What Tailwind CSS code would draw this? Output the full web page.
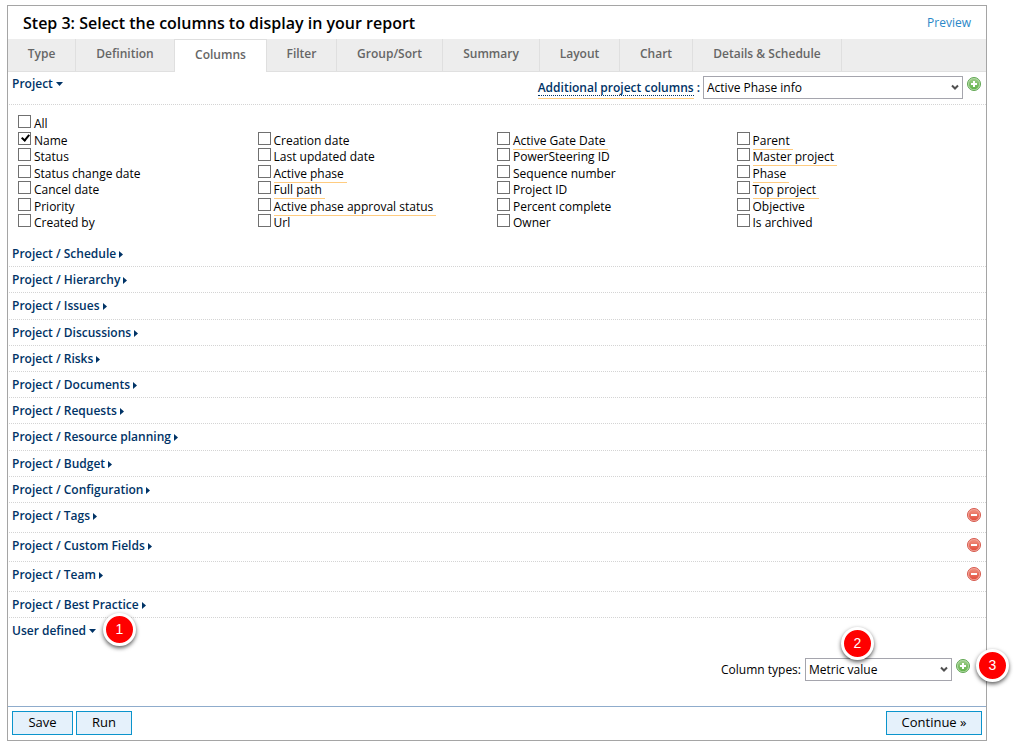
<!DOCTYPE html>
<html lang="en">
<head>
<meta charset="utf-8">
<title>Report wizard - Columns</title>
<script src="https://cdn.jsdelivr.net/npm/@tailwindcss/browser@4"></script>
</head>
<body class="bg-white font-['Open_Sans',sans-serif] text-[13px] text-black">
<svg class="absolute h-0 w-0" aria-hidden="true">
  <defs>
    <linearGradient id="gGreen" x1="0" y1="0" x2="0" y2="1"><stop offset="0" stop-color="#9ccb88"/><stop offset="1" stop-color="#62b34a"/></linearGradient>
    <linearGradient id="gRed" x1="0" y1="0" x2="0" y2="1"><stop offset="0" stop-color="#f0907f"/><stop offset="1" stop-color="#e2503f"/></linearGradient>
    <symbol id="plus" viewBox="0 0 14 14"><circle cx="7" cy="7" r="6.5" fill="#b9deac" stroke="#5fa552"/><circle cx="7" cy="7" r="5.2" fill="url(#gGreen)"/><path d="M7 4v6M4 7h6" stroke="#fff" stroke-width="2"/></symbol>
    <symbol id="minus" viewBox="0 0 14 14"><circle cx="7" cy="7" r="6.5" fill="#f4aa9f" stroke="#d4594d"/><circle cx="7" cy="7" r="5.2" fill="url(#gRed)"/><path d="M4 7h6" stroke="#fff" stroke-width="2"/></symbol>
    <symbol id="right" viewBox="0 0 4 7"><path d="M0 0L4 3.5L0 7z" fill="#003366"/></symbol>
    <symbol id="down" viewBox="0 0 7 4"><path d="M0 0h7L3.5 4z" fill="#003366"/></symbol>
    <symbol id="chev" viewBox="0 0 8 7"><path d="M1 1.5L4 4.5L7 1.5" fill="none" stroke="#505050" stroke-width="2"/></symbol>
  </defs>
</svg>

<main class="relative mt-[5px] mr-[27px] ml-[7px] border border-[#a5a5a5]">
  <header class="flex h-[33px] items-center justify-between pr-[15px] pl-[15px]">
    <h1 class="text-base leading-5 font-semibold">Step 3: Select the columns to display in your report</h1>
    <a href="#" class="text-[12px] text-[#2a87c8]">Preview</a>
  </header>

  <nav class="flex h-[33px] border-b border-[#e0e0e0] bg-[#ededed] text-[12px] leading-[30px] font-semibold text-[#666] [&>a]:border-r [&>a]:border-[#dfdfdf] [&>a]:text-center">
    <a href="#" class="w-[68px]">Type</a>
    <a href="#" class="w-[99px]">Definition</a>
    <a href="#" class="-mb-px w-[92px] border-t bg-white" aria-current="page">Columns</a>
    <a href="#" class="w-[70px]">Filter</a>
    <a href="#" class="w-[106px]">Group/Sort</a>
    <a href="#" class="w-[97px]">Summary</a>
    <a href="#" class="w-[80px]">Layout</a>
    <a href="#" class="w-[73px]">Chart</a>
    <a href="#" class="w-[149px]">Details &amp; Schedule</a>
  </nav>

  <section>
    <div class="ml-px flex h-[33px] items-start justify-between border-b border-dotted border-[#d4d4d4] pr-[5px] pl-[3px] font-semibold text-[#003366]">
      <button class="flex items-center gap-[3px] pt-1 text-[12px] leading-4">Project <svg class="h-1 w-[7px]"><use href="#down"/></svg></button>
      <div class="flex items-start pt-1">
        <label for="addcols" class="mr-[3px] pt-1 text-[12px] leading-4"><span class="inline-block border-b border-[#ffcc80] pb-[2px]"><span class="block border-b border-dotted border-[#003366] leading-[14px]">Additional project columns</span></span> :</label>
        <div class="relative">
          <select id="addcols" class="block h-[23px] w-[260px] appearance-none border border-[#a5a5ad] bg-white pl-[3px] text-[12px] font-normal text-black"><option>Active Phase info</option></select>
          <svg class="pointer-events-none absolute top-[8px] right-[4px] h-[7px] w-2"><use href="#chev"/></svg>
        </div>
        <button aria-label="Add project columns" class="ml-1 pt-px"><svg class="h-[14px] w-[14px]"><use href="#plus"/></svg></button>
      </div>
    </div>

    <div class="mt-[10px] grid h-[116px] grid-flow-col grid-cols-4 grid-rows-7 pr-[10px] pl-[10px] text-[12px] [&_input]:relative [&_input]:h-[13px] [&_input]:w-[13px] [&_input]:shrink-0 [&_input]:appearance-none [&_input]:border [&_input]:border-[#707070] [&_label]:flex [&_label]:h-4 [&_label]:items-start [&_label]:gap-[3px] [&_span]:leading-[17px] [&_span]:whitespace-nowrap [&_u]:-mt-px [&_u]:border-b [&_u]:border-[#ffcc80] [&_u]:pt-px [&_u]:pr-[3px] [&_u]:leading-[17px] [&_u]:whitespace-nowrap [&_u]:no-underline">
      <label><input type="checkbox"><span>All</span></label>
      <label><input type="checkbox" checked class="checked:after:absolute checked:after:top-0 checked:after:left-[4px] checked:after:h-[8px] checked:after:w-[5px] checked:after:rotate-[40deg] checked:after:border-r-2 checked:after:border-b-2 checked:after:border-black checked:after:content-['']"><span>Name</span></label>
      <label><input type="checkbox"><span>Status</span></label>
      <label><input type="checkbox"><span>Status change date</span></label>
      <label><input type="checkbox"><span>Cancel date</span></label>
      <label><input type="checkbox"><span>Priority</span></label>
      <label><input type="checkbox"><span>Created by</span></label>

      <label class="row-start-2"><input type="checkbox"><span>Creation date</span></label>
      <label><input type="checkbox"><span>Last updated date</span></label>
      <label><input type="checkbox"><u>Active phase</u></label>
      <label><input type="checkbox"><u>Full path</u></label>
      <label><input type="checkbox"><u>Active phase approval status</u></label>
      <label><input type="checkbox"><span>Url</span></label>

      <label class="row-start-2"><input type="checkbox"><u>Active Gate Date</u></label>
      <label><input type="checkbox"><span>PowerSteering ID</span></label>
      <label><input type="checkbox"><span>Sequence number</span></label>
      <label><input type="checkbox"><span>Project ID</span></label>
      <label><input type="checkbox"><span>Percent complete</span></label>
      <label><input type="checkbox"><span>Owner</span></label>

      <label class="row-start-2"><input type="checkbox"><u>Parent</u></label>
      <label><input type="checkbox"><u>Master project</u></label>
      <label><input type="checkbox"><u>Phase</u></label>
      <label><input type="checkbox"><u>Top project</u></label>
      <label><input type="checkbox"><span>Objective</span></label>
      <label><input type="checkbox"><span>Is archived</span></label>
    </div>
  </section>

  <section class="mt-[10px] ml-px grid h-[262px] auto-rows-fr text-[12px] leading-4 font-semibold text-[#003366] [&_button]:flex [&_button]:items-center [&_button]:gap-[3px] [&_svg]:mt-px [&_svg]:h-[7px] [&_svg]:w-1 [&>div]:flex [&>div]:items-center [&>div]:border-b [&>div]:border-dotted [&>div]:border-[#d4d4d4] [&>div]:pt-px [&>div]:pl-[3px]">
    <div><button>Project / Schedule <svg><use href="#right"/></svg></button></div>
    <div><button>Project / Hierarchy <svg><use href="#right"/></svg></button></div>
    <div><button>Project / Issues <svg><use href="#right"/></svg></button></div>
    <div><button>Project / Discussions <svg><use href="#right"/></svg></button></div>
    <div><button>Project / Risks <svg><use href="#right"/></svg></button></div>
    <div><button>Project / Documents <svg><use href="#right"/></svg></button></div>
    <div><button>Project / Requests <svg><use href="#right"/></svg></button></div>
    <div><button>Project / Resource planning <svg><use href="#right"/></svg></button></div>
    <div><button>Project / Budget <svg><use href="#right"/></svg></button></div>
    <div><button>Project / Configuration <svg><use href="#right"/></svg></button></div>
  </section>

  <section class="ml-px text-[12px] leading-4 font-semibold text-[#003366] [&>div]:flex [&>div]:items-start [&>div]:justify-between [&>div]:border-b [&>div]:border-dotted [&>div]:border-[#d4d4d4] [&>div]:pt-[5px] [&>div]:pr-[5px] [&>div]:pl-[3px]">
    <div class="h-[30px]"><button class="flex items-center gap-[3px]">Project / Tags <svg class="mt-px h-[7px] w-1"><use href="#right"/></svg></button><button aria-label="Remove tags"><svg class="h-[14px] w-[14px]"><use href="#minus"/></svg></button></div>
    <div class="h-[29px]"><button class="flex items-center gap-[3px]">Project / Custom Fields <svg class="mt-px h-[7px] w-1"><use href="#right"/></svg></button><button aria-label="Remove custom fields"><svg class="h-[14px] w-[14px]"><use href="#minus"/></svg></button></div>
    <div class="h-[30px]"><button class="flex items-center gap-[3px]">Project / Team <svg class="mt-px h-[7px] w-1"><use href="#right"/></svg></button><button aria-label="Remove team"><svg class="h-[14px] w-[14px]"><use href="#minus"/></svg></button></div>
    <div class="h-[26px]"><button class="flex items-center gap-[3px]">Project / Best Practice <svg class="mt-px h-[7px] w-1"><use href="#right"/></svg></button></div>
  </section>

  <section class="h-[88px] pt-[5px]">
    <button class="flex items-center gap-[3px] pl-1 text-[12px] leading-4 font-semibold text-[#003366]">User defined <svg class="h-1 w-[7px]"><use href="#down"/></svg></button>
    <div class="mt-[19px] flex items-start justify-end pr-4">
      <label for="coltype" class="mr-1 pt-1 text-[12px] leading-4">Column types:</label>
      <div class="relative">
        <select id="coltype" class="block h-[23px] w-[147px] appearance-none border border-[#a5a5ad] bg-white pl-[3px] text-[12px]"><option>Metric value</option></select>
        <svg class="pointer-events-none absolute top-[8px] right-[4px] h-[7px] w-2"><use href="#chev"/></svg>
      </div>
      <button aria-label="Add column" class="ml-1 pt-px"><svg class="h-[14px] w-[14px]"><use href="#plus"/></svg></button>
    </div>
  </section>

  <footer class="flex gap-[3px] border-t border-[#8faccc] px-1 pt-1 pb-[5px] text-[13px] [&>button]:h-6 [&>button]:border [&>button]:border-[#0b94cc] [&>button]:bg-[#e5f1fb]">
    <button class="w-[61px]">Save</button>
    <button class="w-[56px]">Run</button>
    <button class="ml-auto w-[96px]">Continue »</button>
  </footer>

  <!-- numbered callouts -->
  <div class="absolute top-[607px] left-[95px] flex h-[33px] w-[33px] items-center justify-center rounded-full border-3 border-white bg-[#f00] font-['Liberation_Sans',sans-serif] text-[14px] text-white shadow-[0_2px_4px_rgba(0,0,0,0.65)]">1</div>
  <div class="absolute top-[621px] right-[112px] flex h-[33px] w-[33px] items-center justify-center rounded-full border-3 border-white bg-[#f00] font-['Liberation_Sans',sans-serif] text-[14px] text-white shadow-[0_2px_4px_rgba(0,0,0,0.65)]">2</div>
  <div class="absolute top-[643px] -right-[23px] flex h-[33px] w-[33px] items-center justify-center rounded-full border-3 border-white bg-[#f00] font-['Liberation_Sans',sans-serif] text-[14px] text-white shadow-[0_2px_4px_rgba(0,0,0,0.65)]">3</div>
</main>
</body>
</html>
